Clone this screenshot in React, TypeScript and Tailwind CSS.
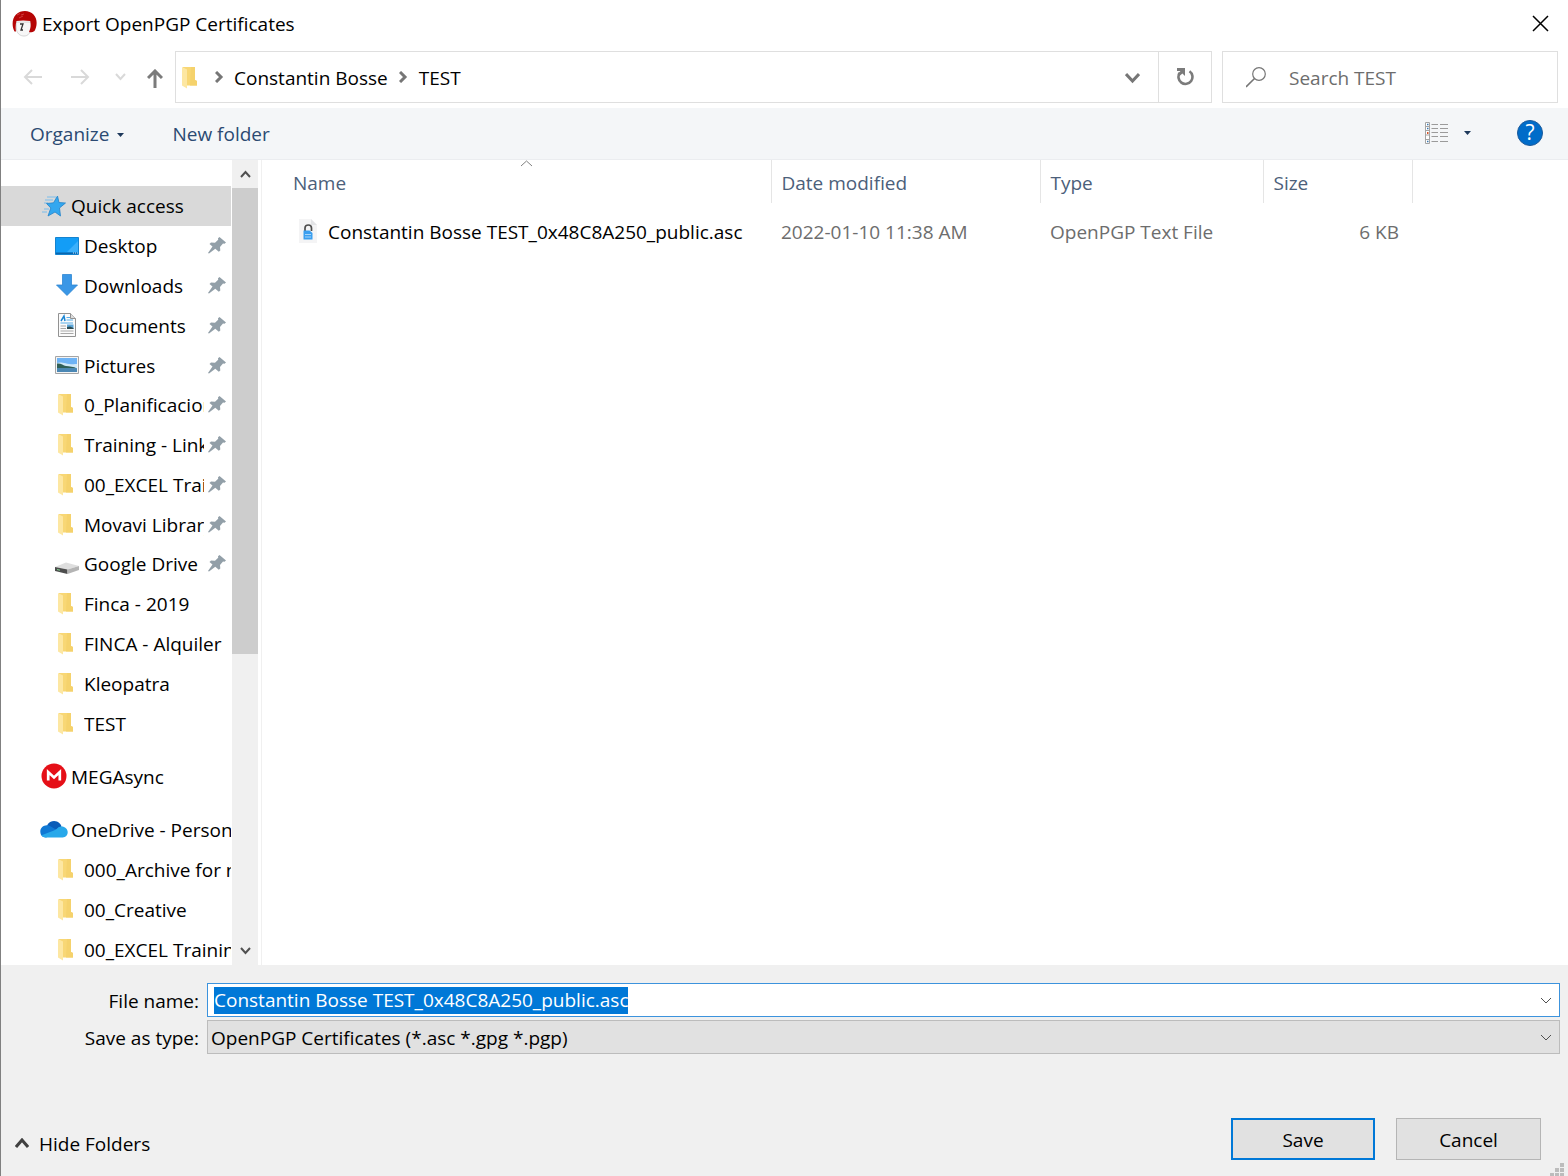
import { useEffect, useRef } from "react";
import type { ReactNode } from "react";

function FolderIcon() {
  return (
    <svg width="16" height="23" viewBox="0 0 16 23" aria-hidden="true">
      <path d="M1 1h12v13l2 1v4.500H1z" fill="#f8d775" />
      <path d="M9 1h4v13l2 1v4.500H8z" fill="#f5d26c" />
      <path d="M0 1l5 2.500v19L0 19.500z" fill="#fde7a2" />
    </svg>
  );
}

function StarIcon() {
  return (
    <svg width="24" height="22" viewBox="0 0 24 22" aria-hidden="true">
      <path d="M5 2h9M3 5h8M2 14h5M0 17h5M2 8h4" stroke="#7dbdec" strokeWidth="1.200" />
      <path d="M15.500 1l1.500 6.500 6.500.5-6 5 1 8-5.500-4-7 4 2.800-8L4.500 8.500l7-.7z" fill="#33a7ef" stroke="#2383c9" strokeWidth=".8" />
    </svg>
  );
}

function DesktopIcon() {
  return (
    <svg width="24" height="18" viewBox="0 0 24 18" aria-hidden="true">
      <path d="M.5.500h23v17H.5z" fill="#139df6" stroke="#1583cf" />
      <path d="M12 15L23 4v11z" fill="#3bb0fb" />
      <path d="M1 15.500h22V17H1z" fill="#0a65ad" />
      <path d="M18 16h1M20 16h1M22 16h1" stroke="#d5ecfb" />
    </svg>
  );
}

function DownloadIcon() {
  return (
    <svg width="22" height="22" viewBox="0 0 22 22" aria-hidden="true">
      <path d="M6.500.500h9v10.500h6L11 21.500.500 11h6z" fill="#3a97e6" stroke="#2f86d2" strokeWidth=".8" />
    </svg>
  );
}

function DocumentIcon() {
  return (
    <svg width="18" height="24" viewBox="0 0 18 24" aria-hidden="true">
      <path d="M.5.500h12l5 5v18H.5z" fill="#fbfbfb" stroke="#929292" />
      <path d="M12.500.500v5h5" fill="#ddd" stroke="#929292" />
      <path d="M3 8l3-5 1 5" fill="none" stroke="#1c86d4" strokeWidth="1.500" />
      <path d="M8.500 4.500H12M8.500 7H15M2.500 10H15" stroke="#58aee8" strokeWidth="1.200" />
      <path d="M2.500 13H8M2.500 15.500H8M2.500 18H15.500M2.500 20.500H15.500" stroke="#a9a9a9" />
      <path d="M9 11.500h6.500v4.500H9z" fill="#5ba5d8" />
      <path d="M9 14l3-.5 3.500 1.500v1H9z" fill="#2d4c52" />
    </svg>
  );
}

function PictureIcon() {
  return (
    <svg width="24" height="18" viewBox="0 0 24 18" aria-hidden="true">
      <path d="M.5.500h23v17H.5z" fill="#f4f4f4" stroke="#a5a5a5" />
      <path d="M2 2h20v14H2z" fill="#6eb3f5" />
      <path d="M2 7c5-2 9 2 20 1v4H2z" fill="#cfe8f8" />
      <path d="M2 7.500c4-.5 6 2 9 2.500s8 .5 11 2.500H2z" fill="#2f5f57" />
      <path d="M2 12.500h20V16H2z" fill="#4a87b4" />
    </svg>
  );
}

function DriveIcon() {
  return (
    <svg width="24" height="20" viewBox="0 0 24 20" aria-hidden="true">
      <path d="M0 13L11 8.500 24 12 12.500 15.500z" fill="#dedede" />
      <path d="M0 13l12.500 2.500V20L0 17z" fill="#4d4d4d" />
      <path d="M12.500 15.500L24 12v4L12.500 20z" fill="#b4b4b4" />
      <path d="M2 15.500l3 .7" stroke="#7fd08e" />
    </svg>
  );
}

function MegaIcon() {
  return (
    <svg width="26" height="26" viewBox="0 0 26 26" aria-hidden="true">
      <circle cx="13" cy="13" r="12.500" fill="#e50f17" />
      <path d="M7.200 17.500V9l5.800 5.400L18.800 9v8.500" fill="none" stroke="#fff" strokeWidth="2.700" />
    </svg>
  );
}

function OneDriveIcon() {
  return (
    <svg width="28" height="18" viewBox="0 0 28 18" aria-hidden="true">
      <path d="M7 5.500C9 1 14 .2 17 1.500c2.500 1 4 3 4.500 5L16 11z" fill="#0a5cb8" />
      <path d="M6 17.500C2 17.500.300 14.500.300 11.500c0-3.500 3-6.300 6.500-6.300 2 0 3.200.6 4.500 1.500l9 5.500z" fill="#0f78d4" />
      <path d="M17 9c1.500-1.800 3-2.500 4.700-2.500L16 11z" fill="#1490df" />
      <path d="M21.500 6.400c3.500 0 6.200 2.500 6.200 5.700s-2 5.400-5 5.400H6c-2 0-3.500-.8-4.400-2.200L14 10.500l3-1.800c1.300-1.500 2.700-2.300 4.500-2.300z" fill="#28a8ea" />
    </svg>
  );
}

function PinIcon() {
  return (
    <svg width="18" height="17" viewBox="0 0 18 17" aria-hidden="true">
      <path d="M11.500 0L18 5.500l-1.500 1.200-1.500-.2-3 3.500.3 3.500-1.500 1.300-3.500-3L1 16.500 0 16l4.500-6.500L1.500 7 3 5.500l4 .3 3.200-3-.2-1.500z" fill="#929fa8" />
    </svg>
  );
}

function AppIcon() {
  return (
    <svg width="26" height="27" viewBox="0 0 26 27" aria-hidden="true">
      <path d="M4 12h15v8c-1.500 4-3.500 6-7 6s-6.500-2-7.500-6z" fill="#f7f7f7" stroke="#c9c9c9" strokeWidth=".8" />
      <path d="M2.500 21.500C0 17-.500 9 4 4.500 9-.500 17.500 0 21.500 4.500c4.500 5 3.500 12 1 16.500-1.500 1.200-4 1.500-5.500 1 2-4 2-7.500 1.200-11C13 10.200 9 10.200 4.500 11c-1 3.500-1 7-.5 10.500z" fill="#b50505" />
      <path d="M5 5l3-1.500M7 8l4-2M9 5l3-1" stroke="#d55" strokeWidth=".7" />
      <path d="M8 14h3l-2 6h2" fill="none" stroke="#333" strokeWidth="1.300" />
    </svg>
  );
}

function FileIcon() {
  return (
    <svg width="18" height="24" viewBox="0 0 18 24" aria-hidden="true">
      <path d="M0 0h12l6 6v18H0z" fill="#f4f4f5" />
      <path d="M12 0v6h6z" fill="#e3e4e6" />
      <path d="M6 12V9c0-4 6.500-4 6.500 0v3" fill="none" stroke="#4d4d4d" strokeWidth="1.700" />
      <path d="M4.500 11.500h6l3 2.500v6.500h-9z" fill="#3a9ff0" />
      <path d="M6 15.500h6M6 18h6" stroke="#a5d5fa" />
    </svg>
  );
}

function Chevron({ path, w, h, className = "", stroke = 3 }: { path: string; w: number; h: number; className?: string; stroke?: number }) {
  return (
    <svg width={w} height={h} viewBox={`0 0 ${w} ${h}`} className={className} aria-hidden="true">
      <path d={path} fill="none" stroke="currentColor" strokeWidth={stroke} />
    </svg>
  );
}

type Place = { name: string; icon: ReactNode; pinned?: boolean };

const folder = (
  <span className="pr-0.5">
    <FolderIcon />
  </span>
);

const quickAccess: Place[] = [
  { name: "Desktop", icon: <DesktopIcon />, pinned: true },
  { name: "Downloads", icon: <DownloadIcon />, pinned: true },
  { name: "Documents", icon: <DocumentIcon />, pinned: true },
  { name: "Pictures", icon: <PictureIcon />, pinned: true },
  { name: "0_Planificacion", icon: folder, pinned: true },
  { name: "Training - Link", icon: folder, pinned: true },
  { name: "00_EXCEL Trai", icon: folder, pinned: true },
  { name: "Movavi Library", icon: folder, pinned: true },
  { name: "Google Drive", icon: <DriveIcon />, pinned: true },
  { name: "Finca - 2019", icon: folder },
  { name: "FINCA - Alquiler", icon: folder },
  { name: "Kleopatra", icon: folder },
  { name: "TEST", icon: folder },
];

const oneDrive: Place[] = [
  { name: "000_Archive for n", icon: folder },
  { name: "00_Creative", icon: folder },
  { name: "00_EXCEL Trainin", icon: folder },
];

function RootRow({ name, icon, selected = false }: { name: string; icon: ReactNode; selected?: boolean }) {
  return (
    <button
      type="button"
      className={`flex h-full min-h-0 w-full items-center pl-[39px] text-left ${selected ? "bg-[#d9d9d9]" : ""}`}
    >
      <span className="flex w-7 shrink-0 justify-center">{icon}</span>
      <span className="min-w-0 overflow-hidden pt-0.5 pl-[3px] whitespace-nowrap">{name}</span>
    </button>
  );
}

function PlaceRow({ place }: { place: Place }) {
  return (
    <button type="button" className="flex h-full min-h-0 w-full items-center pl-[54px] text-left">
      <span className="flex w-6 shrink-0 justify-center">{place.icon}</span>
      <span className="ml-[5px] min-w-0 flex-1 overflow-hidden pt-0.5 whitespace-nowrap">{place.name}</span>
      {place.pinned && (
        <span className="ml-1 w-[23px] shrink-0">
          <PinIcon />
        </span>
      )}
    </button>
  );
}

function Sidebar() {
  return (
    <nav aria-label="Folders" className="flex w-[261px] shrink-0 border-r border-[#f0f0f0] pr-[3px]">
      <div className="flex min-w-0 flex-1 flex-col gap-[13px] overflow-hidden pt-[26px] pr-px">
        <ul className="grid h-[557px] shrink-0 auto-rows-fr grid-cols-1">
          <li className="min-w-0">
            <RootRow name="Quick access" icon={<StarIcon />} selected />
          </li>
          {quickAccess.map((place) => (
            <li key={place.name} className="min-h-0 min-w-0">
              <PlaceRow place={place} />
            </li>
          ))}
        </ul>
        <div className="h-10 shrink-0">
          <RootRow name="MEGAsync" icon={<MegaIcon />} />
        </div>
        <ul className="shrink-0">
          <li className="h-10">
            <RootRow name="OneDrive - Personal" icon={<OneDriveIcon />} />
          </li>
          {oneDrive.map((place) => (
            <li key={place.name} className="h-10">
              <PlaceRow place={place} />
            </li>
          ))}
        </ul>
      </div>
      <div className="flex w-[26px] shrink-0 flex-col bg-[#f0f0f0]">
        <button type="button" aria-label="Scroll up" className="flex h-7 shrink-0 items-center justify-center text-[#505050]">
          <Chevron path="M1 7l4.500-5L10 7" w={11} h={8} stroke={2} />
        </button>
        <div className="min-h-0 flex-[466] bg-[#cdcdcd]" />
        <div className="min-h-0 flex-[283]" />
        <button type="button" aria-label="Scroll down" className="flex h-7 shrink-0 items-center justify-center text-[#505050]">
          <Chevron path="M1 1l4.500 5L10 1" w={11} h={8} stroke={2} />
        </button>
      </div>
    </nav>
  );
}

function FileList() {
  return (
    <main className="min-w-0 flex-1 overflow-hidden">
      <table className="w-[1150px] table-fixed border-collapse text-left">
        <colgroup>
          <col className="w-[509px]" />
          <col className="w-[269px]" />
          <col className="w-[223px]" />
          <col className="w-[149px]" />
        </colgroup>
        <thead className="text-[#4c607a]">
          <tr className="h-[43px]">
            <th scope="col" className="relative border-r border-[#e5e5e5] pt-1 pl-[31px] font-normal">
              Name
              <Chevron path="M1 6l5.500-5L12 6" w={13} h={7} className="absolute top-0 left-1/2 ml-1 text-[#808080]" stroke={1} />
            </th>
            <th scope="col" className="border-r border-[#e5e5e5] pt-1 pl-2.5 font-normal">Date modified</th>
            <th scope="col" className="border-r border-[#e5e5e5] pt-1 pl-2.5 font-normal">Type</th>
            <th scope="col" className="border-r border-[#e5e5e5] pt-1 pl-2.5 font-normal">Size</th>
          </tr>
        </thead>
        <tbody className="text-[#6d6d6d]">
          <tr className="h-14">
            <td className="pl-[37px] text-black">
              <span className="flex items-center gap-[11px] whitespace-nowrap">
                <FileIcon />
                <span className="pt-0.5">Constantin Bosse TEST_0x48C8A250_public.asc</span>
              </span>
            </td>
            <td className="pt-0.5 pl-2.5">2022-01-10 11:38 AM</td>
            <td className="pt-0.5 pl-2.5">OpenPGP Text File</td>
            <td className="pt-0.5 pr-[13px] text-right">6 KB</td>
          </tr>
        </tbody>
      </table>
    </main>
  );
}

function AddressBar() {
  return (
    <div className="flex h-[57px] shrink-0 items-start pr-2.5 pb-1.5">
      <div className="flex h-[52px] w-[174px] shrink-0 items-center text-[#d9d9d9]">
        <button type="button" aria-label="Back" className="ml-[22px]">
          <Chevron path="M19 8H2M9 1L2 8l7 7" w={20} h={16} stroke={2} />
        </button>
        <button type="button" aria-label="Forward" className="ml-7">
          <Chevron path="M0 8h17M10 1l7 7-7 7" w={20} h={16} stroke={2} />
        </button>
        <button type="button" aria-label="Recent locations" className="ml-6">
          <Chevron path="M1 1l4.500 5L10 1" w={12} h={8} stroke={2} />
        </button>
        <button type="button" aria-label="Up" className="ml-5 pt-1 text-[#7b7b7b]">
          <Chevron path="M8 19V2M1 9l7-7 7 7" w={16} h={20} stroke={3} />
        </button>
      </div>
      <div className="flex h-[52px] min-w-0 flex-1 items-center border border-[#dfdfdf] pl-1.5">
        <FolderIcon />
        <Chevron path="M1 1l5 5-5 5" w={9} h={12} className="ml-[17px] text-[#767676]" />
        <button type="button" className="ml-[10px] pt-0.5">Constantin Bosse</button>
        <Chevron path="M1 1l5 5-5 5" w={9} h={12} className="ml-[11px] text-[#767676]" />
        <button type="button" className="ml-[11px] pt-0.5">TEST</button>
        <button type="button" aria-label="Previous locations" className="mr-[18px] ml-auto pt-0.5 text-[#767676]">
          <Chevron path="M1 1l6.500 7L14 1" w={15} h={11} />
        </button>
        <button type="button" aria-label="Refresh" className="flex h-full w-[53px] items-center justify-center border-l border-[#dfdfdf] text-[#7b7b7b]">
          <svg width="18" height="18" viewBox="0 0 18 18" aria-hidden="true">
            <path d="M13.500 3.200A7 7 0 1 1 3.800 4.800" fill="none" stroke="currentColor" strokeWidth="2.600" />
            <path d="M1 0h8v8L6.400 5.400 3.500 8 1.500 6l3-3H1z" fill="currentColor" />
          </svg>
        </button>
      </div>
      <label className="ml-2.5 flex h-[52px] w-[336px] shrink-0 items-center border border-[#dfdfdf] pl-[23px]">
        <svg width="20" height="21" viewBox="0 0 20 21" className="shrink-0 text-[#767676]" aria-hidden="true">
          <circle cx="13" cy="7" r="6.300" fill="none" stroke="currentColor" strokeWidth="1.200" />
          <path d="M8.500 11.500L0 20" stroke="currentColor" strokeWidth="1.600" />
        </svg>
        <input
          type="search"
          aria-label="Search TEST"
          placeholder="Search TEST"
          className="ml-[23px] min-w-0 flex-1 bg-transparent pt-0.5 outline-none placeholder:text-[#6d6d6d]"
        />
      </label>
    </div>
  );
}

function Toolbar() {
  return (
    <div className="flex h-[52px] shrink-0 items-center border-b border-[#ebedf0] bg-[#f4f6f8] pr-[25px] pl-[29px] text-[#2b4a72]">
      <button type="button" className="flex items-center gap-2 pt-0.5">
        Organize
        <svg width="7" height="4" viewBox="0 0 7 4" aria-hidden="true"><path d="M0 0h7L3.500 4z" fill="#1e395b" /></svg>
      </button>
      <button type="button" className="ml-12 pt-0.5">New folder</button>
      <button type="button" aria-label="Change your view" className="ml-auto flex items-center gap-4 pb-0.5">
        <svg width="23" height="22" viewBox="0 0 23 22" aria-hidden="true">
          <path d="M.5.500h4v21h-4zM.5 4.500h4M.5 8.500h4M.5 13h4M.5 17.500h4" fill="#fff" stroke="#a4a4a4" />
          <path d="M2 2.500h1.500M2 6.500h1.500M2 19.500h1.500" stroke="#3a78b0" strokeWidth="1.500" />
          <path d="M2 11h1.500" stroke="#d5542a" strokeWidth="2" />
          <path d="M6.500 2.500H13M15 2.500h8M6.500 6.500H13M15 6.500h8M6.500 10.500H13M15 10.500h8M6.500 14.500H13M15 14.500h8M6.500 19.500H13M15 19.500h8" stroke="#9b9b9b" />
        </svg>
        <svg width="7" height="4" viewBox="0 0 7 4" aria-hidden="true"><path d="M0 0h7L3.500 4z" fill="#1e395b" /></svg>
      </button>
      <button type="button" aria-label="Help" className="mb-0.5 ml-[46px] flex size-[26px] items-center justify-center rounded-full border border-[#1b5a9b] bg-[#006cc9] text-[21px] text-white">
        ?
      </button>
    </div>
  );
}

function Footer() {
  const fileName = useRef<HTMLInputElement>(null);

  useEffect(() => {
    fileName.current?.focus();
    fileName.current?.select();
  }, []);

  return (
    <footer className="relative flex h-[211px] shrink-0 flex-col bg-[#f0f0f0] pt-[18px] pr-2">
      <div className="grid grid-cols-[198px_1fr] items-center gap-x-2 gap-y-[3px]">
        <label htmlFor="file-name" className="pt-0.5 text-right">File name:</label>
        <div className="flex h-[34px] min-w-0 items-center border border-[#3c93dd] bg-white pl-1.5">
          <input
            id="file-name"
            ref={fileName}
            defaultValue="Constantin Bosse TEST_0x48C8A250_public.asc"
            spellCheck={false}
            className="min-w-0 flex-1 bg-transparent outline-none selection:bg-[#0078d7] selection:text-white"
          />
          <button type="button" aria-label="Recent file names" className="px-[7px] text-[#505050]">
            <Chevron path="M1 1l5 5 5-5" w={12} h={7} stroke={1} />
          </button>
        </div>
        <label htmlFor="file-type" className="pt-0.5 text-right">Save as type:</label>
        <div className="relative flex h-[34px] items-center border border-[#bcbcbc] bg-[#e1e1e1]">
          <select id="file-type" className="h-full w-full appearance-none bg-transparent pt-0.5 pl-[3px] outline-none">
            <option>OpenPGP Certificates (*.asc *.gpg *.pgp)</option>
          </select>
          <Chevron path="M1 1l5 5 5-5" w={12} h={7} className="pointer-events-none absolute right-[7px] text-[#505050]" stroke={1} />
        </div>
      </div>
      <div className="mt-auto mb-4 flex items-center pr-[19px] pl-[14px]">
        <button type="button" className="mt-2 flex items-center gap-2.5">
          <Chevron path="M1 9l6-7 6 7" w={14} h={10} className="text-[#404040]" />
          <span className="pt-0.5">Hide Folders</span>
        </button>
        <button type="button" className="ml-auto h-[42px] w-[144px] border-2 border-[#0078d7] bg-[#e1e1e1] pt-0.5">Save</button>
        <button type="button" className="ml-[21px] h-[42px] w-[145px] border border-[#b5b5b5] bg-[#e1e1e1] pt-0.5">Cancel</button>
      </div>
      <svg width="14" height="14" viewBox="0 0 14 14" className="absolute right-1 bottom-0" aria-hidden="true">
        <path d="M10 1h4v4h-4zM5 6h4v4H5zM10 6h4v4h-4zM0 11h4v3H0zM5 11h4v3H5zM10 11h4v3h-4z" fill="#bcbcbc" />
      </svg>
    </footer>
  );
}

export default function App() {
  return (
    <div className="flex h-screen flex-col overflow-hidden border-l border-[#808080] bg-white font-['Open_Sans','Noto_Sans',sans-serif] text-[19px] leading-[27px] text-black">
      <header className="flex h-[51px] shrink-0 items-center pr-[19px] pb-1 pl-[11px]">
        <AppIcon />
        <h1 className="ml-1 pt-0.5">Export OpenPGP Certificates</h1>
        <button type="button" aria-label="Close" className="ml-auto">
          <Chevron path="M1 1l15 15M16 1L1 16" w={17} h={17} stroke={1.5} />
        </button>
      </header>
      <AddressBar />
      <Toolbar />
      <div className="flex min-h-0 flex-1">
        <Sidebar />
        <FileList />
      </div>
      <Footer />
    </div>
  );
}
